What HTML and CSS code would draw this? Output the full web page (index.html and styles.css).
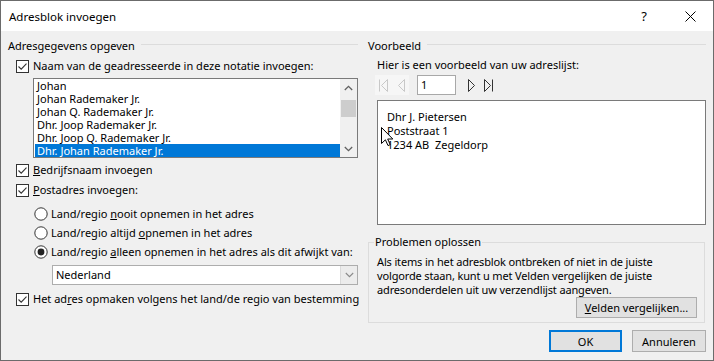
FILE: index.html
```html
<!DOCTYPE html>
<html lang="nl">

<head>
    <meta charset="UTF-8">
    <title>Adresblok invoegen</title>
    <link rel="stylesheet" href="styles.css">
</head>

<body>
    <div class="dialog">
        <div class="titlebar">
            <span class="title">Adresblok invoegen</span>
            <span class="tb-btn">?</span>
            <span class="tb-btn">
                <svg width="11" height="11" viewBox="0 0 11 11">
                    <path d="M0.5 0.5 L10.5 10.5 M10.5 0.5 L0.5 10.5" stroke="#000" stroke-width="1" fill="none" />
                </svg>
            </span>
        </div>

        <div class="content">
            <!-- linker kolom -->
            <div class="col-left">
                <div class="group-head"><span>Adresgegevens opgeven</span></div>

                <div class="row check gap4">
                    <svg class="cb" width="13" height="13" viewBox="0 0 13 13">
                        <rect x="0.5" y="0.5" width="12" height="12" fill="#fff" stroke="#333" />
                        <path d="M2.5 6.5 L5.2 9.2 L10.5 3.6" fill="none" stroke="#333" stroke-width="1.1" />
                    </svg>
                    <span>Naam van de <u>g</u>eadresseerde in deze notatie invoegen:</span>
                </div>

                <div class="listbox">
                    <div class="list-items">
                        <div class="item">Johan</div>
                        <div class="item">Johan Rademaker Jr.</div>
                        <div class="item">Johan Q. Rademaker Jr.</div>
                        <div class="item">Dhr. Joop Rademaker Jr.</div>
                        <div class="item">Dhr. Joop Q. Rademaker Jr.</div>
                        <div class="item selected">Dhr. Johan Rademaker Jr.</div>
                    </div>
                    <div class="scrollbar">
                        <div class="sb-arrow">
                            <svg width="9" height="6" viewBox="0 0 9 6"><path d="M0.8 5 L4.5 1.3 L8.2 5" fill="none" stroke="#606060" stroke-width="1.3" /></svg>
                        </div>
                        <div class="sb-track"><div class="sb-thumb"></div></div>
                        <div class="sb-arrow">
                            <svg width="9" height="6" viewBox="0 0 9 6"><path d="M0.8 1 L4.5 4.7 L8.2 1" fill="none" stroke="#606060" stroke-width="1.3" /></svg>
                        </div>
                    </div>
                </div>

                <div class="row check gap4">
                    <svg class="cb" width="13" height="13" viewBox="0 0 13 13">
                        <rect x="0.5" y="0.5" width="12" height="12" fill="#fff" stroke="#333" />
                        <path d="M2.5 6.5 L5.2 9.2 L10.5 3.6" fill="none" stroke="#333" stroke-width="1.1" />
                    </svg>
                    <span><u>B</u>edrijfsnaam invoegen</span>
                </div>

                <div class="row check gap4">
                    <svg class="cb" width="13" height="13" viewBox="0 0 13 13">
                        <rect x="0.5" y="0.5" width="12" height="12" fill="#fff" stroke="#333" />
                        <path d="M2.5 6.5 L5.2 9.2 L10.5 3.6" fill="none" stroke="#333" stroke-width="1.1" />
                    </svg>
                    <span><u>P</u>ostadres invoegen:</span>
                </div>

                <div class="row radio gap8">
                    <svg width="14" height="14" viewBox="0 0 14 14"><circle cx="7" cy="7" r="6.2" fill="#fff" stroke="#333" /></svg>
                    <span>Land/regio <u>n</u>ooit opnemen in het adres</span>
                </div>
                <div class="row radio gap3">
                    <svg width="14" height="14" viewBox="0 0 14 14"><circle cx="7" cy="7" r="6.2" fill="#fff" stroke="#333" /></svg>
                    <span>Land/regio altijd <u>o</u>pnemen in het adres</span>
                </div>
                <div class="row radio gap3">
                    <svg width="14" height="14" viewBox="0 0 14 14"><circle cx="7" cy="7" r="6.2" fill="#fff" stroke="#333" /><circle cx="7" cy="7" r="3.4" fill="#222" /></svg>
                    <span>Land/regio <u>a</u>lleen opnemen in het adres als dit afwijkt van:</span>
                </div>

                <div class="combo">
                    <span class="combo-text">Nederland</span>
                    <span class="combo-btn">
                        <svg width="9" height="6" viewBox="0 0 9 6"><path d="M0.8 1 L4.5 4.7 L8.2 1" fill="none" stroke="#8a8a8a" stroke-width="1.1" /></svg>
                    </span>
                </div>

                <div class="row check gap6">
                    <svg class="cb" width="13" height="13" viewBox="0 0 13 13">
                        <rect x="0.5" y="0.5" width="12" height="12" fill="#fff" stroke="#333" />
                        <path d="M2.5 6.5 L5.2 9.2 L10.5 3.6" fill="none" stroke="#333" stroke-width="1.1" />
                    </svg>
                    <span>Het ad<u>r</u>es opmaken volgens het land/de regio van bestemming</span>
                </div>
            </div>

            <!-- rechter kolom -->
            <div class="col-right">
                <div class="group-head"><span>Voorbeeld</span></div>
                <div class="hint">Hier is een voorbeeld van uw adreslijst:</div>

                <div class="nav">
                    <span class="nav-btn disabled">
                        <svg width="9" height="13" viewBox="0 0 9 13"><path d="M0.5 0.5 V12.5 M8.5 0.5 L2.5 6.5 L8.5 12.5 Z" fill="none" stroke="#c8c8c8" /></svg>
                    </span>
                    <span class="nav-btn disabled">
                        <svg width="8" height="13" viewBox="0 0 8 13"><path d="M7.5 0.5 L1.5 6.5 L7.5 12.5 Z" fill="none" stroke="#c8c8c8" /></svg>
                    </span>
                    <span class="nav-input">1</span>
                    <span class="nav-btn">
                        <svg width="8" height="13" viewBox="0 0 8 13"><path d="M0.5 0.5 L6.5 6.5 L0.5 12.5 Z" fill="none" stroke="#333" /></svg>
                    </span>
                    <span class="nav-btn">
                        <svg width="9" height="13" viewBox="0 0 9 13"><path d="M8.5 0.5 V12.5 M0.5 0.5 L6.5 6.5 L0.5 12.5 Z" fill="none" stroke="#333" /></svg>
                    </span>
                </div>

                <div class="preview">
                    <div>Dhr J. Pietersen</div>
                    <div>Poststraat 1</div>
                    <div>1234 AB&nbsp; Zegeldorp</div>
                    <svg class="cursor" width="13" height="20" viewBox="0 0 13 20">
                        <path d="M0.5 0.5 L0.5 16.5 L4.4 12.8 L7 18.6 L9.2 17.6 L6.7 12 L11.8 12 Z" fill="#fff" stroke="#000" stroke-width="1" stroke-linejoin="miter" />
                    </svg>
                </div>

                <fieldset class="trouble">
                    <legend>Problemen oplossen</legend>
                    <p>Als items in het adresblok ontbreken of niet in de juiste<br>volgorde staan, kunt u met Velden vergelijken de juiste<br>adresonderdelen uit uw verzendlijst aangeven.</p>
                    <div class="trouble-actions">
                        <button type="button" class="btn btn-match"><u>V</u>elden vergelijken...</button>
                    </div>
                </fieldset>

                <div class="actions">
                    <button type="button" class="btn btn-ok">OK</button>
                    <button type="button" class="btn btn-cancel">Annuleren</button>
                </div>
            </div>
        </div>
    </div>
</body>

</html>
```

FILE: styles.css
```css
* {
    box-sizing: border-box;
}

body {
    margin: 0;
    font-family: 'Noto Sans', sans-serif;
    font-size: 11px;
    color: #000;
    background-color: #f0f0f0;
}

svg {
    flex-shrink: 0;
}

.dialog {
    width: 714px;
    height: 361px;
    border: 1px solid #6b6b6b;
    background-color: #f0f0f0;
    display: flex;
    flex-direction: column;
}

.titlebar {
    height: 30px;
    background-color: #fff;
    display: flex;
    align-items: center;
    padding-left: 8px;
    font-size: 11.5px;
}

.title {
    flex: 1;
}

.tb-btn {
    width: 46px;
    height: 30px;
    display: flex;
    align-items: center;
    justify-content: center;
    font-size: 13px;
}

.content {
    flex: 1;
    display: flex;
    gap: 10px;
    padding: 7px 7px 0 7px;
}

.col-left {
    width: 350px;
    display: flex;
    flex-direction: column;
}

.col-right {
    width: 338px;
    display: flex;
    flex-direction: column;
}

.group-head {
    height: 16px;
    line-height: 16px;
    display: flex;
    align-items: center;
}

.group-head::after {
    content: "";
    flex: 1;
    border-top: 1px solid #dcdcdc;
    margin-left: 6px;
    margin-top: -3px;
}

.row {
    height: 16px;
    line-height: 16px;
    display: flex;
    align-items: center;
    gap: 4px;
    white-space: nowrap;
}

.check {
    margin-left: 8px;
}

.radio {
    margin-left: 26px;
    gap: 3px;
}

.gap3 { margin-top: 3px; }
.gap4 { margin-top: 4px; }
.gap6 { margin-top: 6px; }
.gap8 { margin-top: 8px; }

.listbox {
    margin-top: 4px;
    margin-left: 25px;
    width: 325px;
    height: 80px;
    border: 1px solid #7a7a7a;
    background-color: #fff;
    display: flex;
}

.list-items {
    flex: 1;
    padding-left: 1px;
}

.item {
    height: 13px;
    line-height: 13px;
    padding-left: 2px;
    white-space: nowrap;
    overflow: hidden;
}

.item.selected {
    background-color: #0078d7;
    color: #fff;
}

.scrollbar {
    width: 17px;
    background-color: #f0f0f0;
    display: flex;
    flex-direction: column;
}

.sb-arrow {
    height: 17px;
    display: flex;
    align-items: center;
    justify-content: center;
}

.sb-track {
    flex: 1;
    padding: 4px 1px 0 1px;
}

.sb-thumb {
    height: 17px;
    background-color: #cdcdcd;
}

.combo {
    margin-top: 5px;
    margin-left: 44px;
    width: 306px;
    height: 20px;
    border: 1px solid #adadad;
    background-color: #fff;
    display: flex;
}

.combo-text {
    flex: 1;
    padding-left: 3px;
    line-height: 18px;
}

.combo-btn {
    width: 17px;
    background-color: #ececec;
    border-left: 1px solid #dadada;
    display: flex;
    align-items: center;
    justify-content: center;
}

.hint {
    margin-top: 3px;
    margin-left: 9px;
    height: 16px;
    line-height: 16px;
}

.nav {
    margin-top: 2px;
    margin-left: 7px;
    height: 20px;
    display: flex;
    align-items: center;
}

.nav-btn {
    width: 16px;
    height: 20px;
    display: flex;
    align-items: center;
    justify-content: center;
}

.nav-btn.disabled {
    background-color: #f6f6f6;
    width: 17px;
}

.nav-input {
    margin: 0 8px 0 8px;
    width: 39px;
    height: 20px;
    border: 1px solid #a8a8a8;
    background-color: #fff;
    line-height: 18px;
    padding-left: 3px;
}

.preview {
    position: relative;
    margin-top: 5px;
    margin-left: 9px;
    height: 125px;
    border: 1px solid #7a7a7a;
    background-color: #fff;
    padding: 9px 0 0 9px;
    line-height: 14px;
}

.cursor {
    position: absolute;
    left: 3px;
    top: 26px;
}

.trouble {
    margin: 9px 1px 0 0;
    border: 1px solid #dcdcdc;
    padding: 0 7px 4px 8px;
    min-width: 0;
}

.trouble legend {
    padding: 0 1px;
    margin-left: -3px;
    line-height: 16px;
}

.trouble p {
    margin: 5px 0 0 0;
    line-height: 14px;
    letter-spacing: -0.15px;
}

.trouble-actions {
    display: flex;
    justify-content: flex-end;
}

.btn {
    font-family: 'Noto Sans', sans-serif;
    font-size: 11px;
    color: #000;
    background-color: #e1e1e1;
    border: 1px solid #adadad;
    padding: 0;
    margin: 0;
}

.btn-match {
    width: 121px;
    height: 21px;
}

.actions {
    margin-top: 7px;
    display: flex;
    justify-content: flex-end;
    gap: 10px;
}

.btn-ok {
    width: 73px;
    height: 22px;
    border: 2px solid #0078d7;
}

.btn-cancel {
    width: 74px;
    height: 22px;
}
```
